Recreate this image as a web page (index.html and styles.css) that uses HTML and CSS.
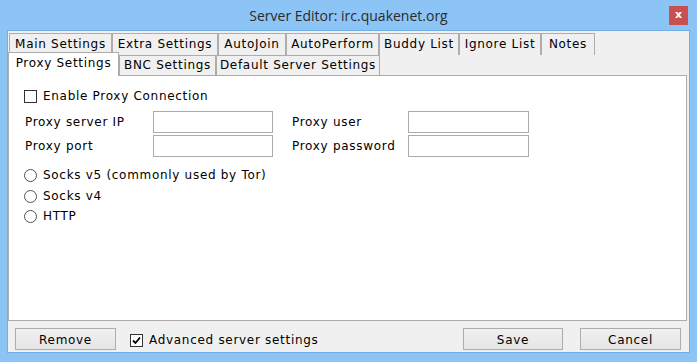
FILE: index.html
```html
<!DOCTYPE html>
<html lang="en">
<head>
    <meta charset="UTF-8">
    <title>Server Editor: irc.quakenet.org</title>
    <link rel="stylesheet" href="styles.css">
</head>
<body>
    <div class="window">
        <div class="titlebar">
            <span></span>
            <span class="title">Server Editor: irc.quakenet.org</span>
            <span class="close">x</span>
        </div>
        <div class="client">
            <div class="tabrow row1">
                <span class="tab t-main">Main Settings</span>
                <span class="tab t-extra">Extra Settings</span>
                <span class="tab t-join">AutoJoin</span>
                <span class="tab t-perform">AutoPerform</span>
                <span class="tab t-buddy">Buddy List</span>
                <span class="tab t-ignore">Ignore List</span>
                <span class="tab t-notes">Notes</span>
            </div>
            <div class="tabrow row2">
                <span class="tab selected t-proxy">Proxy Settings</span>
                <span class="tab t-bnc">BNC Settings</span>
                <span class="tab t-default">Default Server Settings</span>
            </div>
            <div class="panel">
                <div class="option">
                    <span class="check"></span>
                    <span>Enable Proxy Connection</span>
                </div>
                <div class="fields">
                    <span>Proxy server IP</span>
                    <span class="textbox"></span>
                    <span></span>
                    <span>Proxy user</span>
                    <span class="textbox"></span>
                    <span>Proxy port</span>
                    <span class="textbox"></span>
                    <span></span>
                    <span>Proxy password</span>
                    <span class="textbox"></span>
                </div>
                <div class="radios">
                    <div class="option"><span class="radio"></span><span>Socks v5 (commonly used by Tor)</span></div>
                    <div class="option"><span class="radio"></span><span>Socks v4</span></div>
                    <div class="option"><span class="radio"></span><span>HTTP</span></div>
                </div>
            </div>
            <div class="footer">
                <span class="button b-remove">Remove</span>
                <div class="option advanced">
                    <span class="check">
                        <svg width="11" height="11" viewBox="0 0 11 11"><path d="M2 5.5 L4.5 8 L9 2.5" fill="none" stroke="#000" stroke-width="1.8"/></svg>
                    </span>
                    <span>Advanced server settings</span>
                </div>
                <span class="spacer"></span>
                <span class="button b-save">Save</span>
                <span class="button b-cancel">Cancel</span>
            </div>
        </div>
    </div>
</body>
</html>
```

FILE: styles.css
```css
body {
    margin: 0;
    background-color: #8bc4f5;
    font-family: "DejaVu Sans", Verdana, sans-serif;
    font-size: 12px;
    letter-spacing: 0.7px;
    color: #000;
}
.window {
    width: 697px;
    height: 362px;
    box-sizing: border-box;
    padding: 0 7px 9px 7px;
    display: flex;
    flex-direction: column;
}
.titlebar {
    height: 30px;
    display: grid;
    grid-template-columns: 1fr auto 1fr;
    align-items: center;
}
.title {
    font-family: "Open Sans", "Noto Sans", sans-serif;
    font-size: 14px;
    letter-spacing: 0;
    color: #2b2b2b;
    padding-top: 1px;
}
.close {
    justify-self: end;
    align-self: start;
    margin-top: 6px;
    margin-right: 2px;
    width: 19px;
    height: 19px;
    background-color: #c75050;
    color: #fff;
    font-weight: bold;
    font-size: 11px;
    letter-spacing: 0;
    line-height: 18px;
    text-align: center;
}
.client {
    flex: 1;
    background-color: #f0f0f0;
    border: 1px solid #74aee6;
    display: flex;
    flex-direction: column;
    padding-top: 2px;
}
.tabrow {
    display: flex;
    align-items: flex-start;
}
.row1 {
    height: 22px;
    padding-left: 1px;
}
.row2 {
    height: 20px;
}
.tab {
    box-sizing: border-box;
    border: 1px solid #adadad;
    border-bottom: none;
    background-color: #f0f0f0;
    text-align: center;
    white-space: nowrap;
}
.row1 .tab {
    height: 22px;
    line-height: 21px;
}
.row2 .tab {
    height: 20px;
    line-height: 19px;
}
.row2 .tab.selected {
    position: relative;
    z-index: 1;
    height: 24px;
    margin-top: -3px;
    line-height: 20px;
    background-color: #fff;
}
.t-main { width: 103px; }
.t-extra { width: 106px; }
.t-join { width: 68px; }
.t-perform { width: 93px; }
.t-buddy { width: 80px; }
.t-ignore { width: 82px; }
.t-notes { width: 54px; }
.t-proxy { width: 111px; }
.t-bnc { width: 97px; }
.t-default { width: 164px; }
.panel {
    height: 246px;
    box-sizing: border-box;
    margin-right: 2px;
    border: 1px solid #adadad;
    background-color: #fff;
    padding: 14px 0 0 15px;
}
.option {
    display: flex;
    align-items: center;
    gap: 6px;
    height: 13px;
    line-height: 13px;
}
.check, .radio {
    box-sizing: border-box;
    width: 13px;
    height: 13px;
    border: 1px solid #333;
    background-color: #fff;
    flex-shrink: 0;
    display: flex;
    align-items: center;
    justify-content: center;
}
.radio {
    border-color: #555;
    border-radius: 50%;
}
.fields {
    margin: 8px 0 0 1px;
    display: grid;
    grid-template-columns: 128px 120px 19px 116px 121px;
    grid-auto-rows: 22px;
    row-gap: 2px;
    align-items: center;
}
.textbox {
    box-sizing: border-box;
    height: 22px;
    border: 1px solid #ababab;
    background-color: #fff;
}
.radios {
    margin-top: 12px;
    display: flex;
    flex-direction: column;
    gap: 7.5px;
}
.footer {
    display: flex;
    align-items: center;
    padding: 7px 8px 0 7px;
}
.button {
    box-sizing: border-box;
    height: 22px;
    line-height: 22px;
    border: 1px solid #adadad;
    background: linear-gradient(#f0f0f0, #e5e5e5);
    text-align: center;
}
.b-remove { width: 101px; }
.b-save { width: 100px; }
.b-cancel { width: 101px; margin-left: 17px; }
.advanced {
    margin-left: 14px;
    margin-top: 2px;
}
.spacer {
    flex: 1;
}
```
